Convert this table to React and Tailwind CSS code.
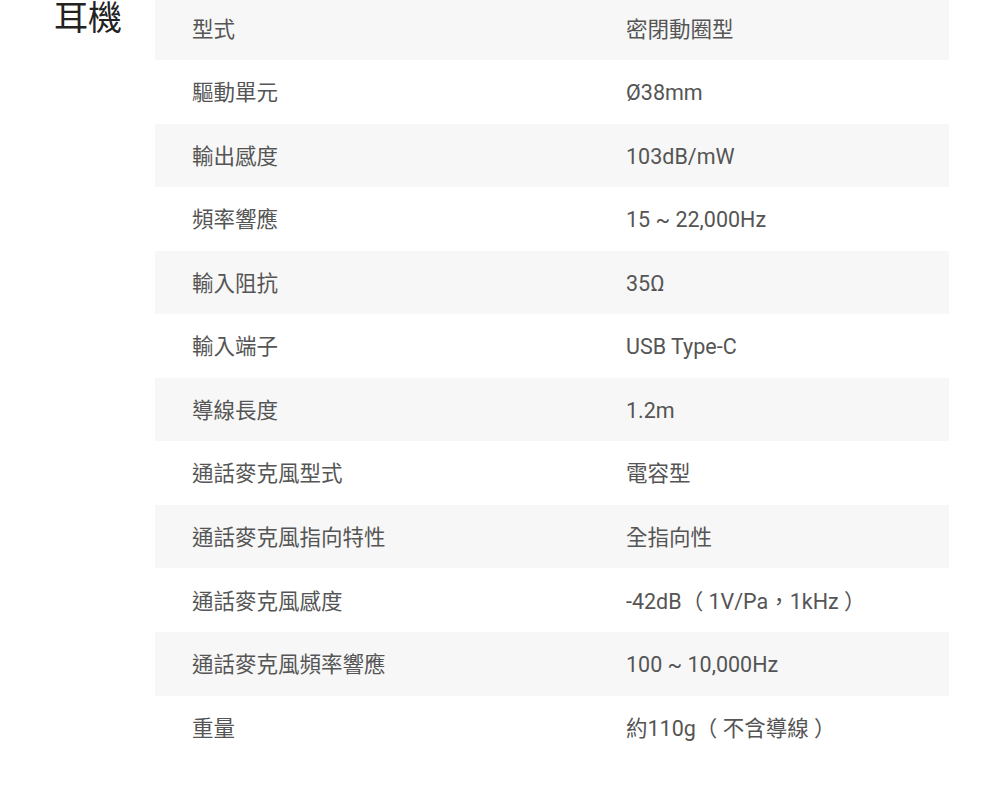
import React from 'react';

const specs = [
  ['型式', '密閉動圈型'],
  ['驅動單元', 'Ø38mm'],
  ['輸出感度', '103dB/mW'],
  ['頻率響應', '15 ~ 22,000Hz'],
  ['輸入阻抗', '35Ω'],
  ['輸入端子', 'USB Type-C'],
  ['導線長度', '1.2m'],
  ['通話麥克風型式', '電容型'],
  ['通話麥克風指向特性', '全指向性'],
  ['通話麥克風感度', '-42dB（ 1V/Pa，1kHz ）'],
  ['通話麥克風頻率響應', '100 ~ 10,000Hz'],
  ['重量', '約110g（ 不含導線 ）'],
];

const App = () => {
  return (
    <div
      className="min-h-screen bg-white"
      style={{ fontFamily: 'Roboto, "Noto Sans CJK TC", sans-serif' }}
    >
      <div className="flex -mt-[3.5px] pr-[51px]">
        {/* Section title */}
        <div className="w-[155px] shrink-0 pl-[54px] pt-[3.5px]">
          <h2 className="text-[34px] leading-[36px] text-[#222]">耳機</h2>
        </div>

        {/* Spec table */}
        <div className="flex-1">
          {specs.map(([label, value], i) => (
            <div
              key={label}
              className={`grid grid-cols-[434px_1fr] h-[63.55px] items-center text-[21.5px] text-[#555] ${
                i % 2 === 0 ? 'bg-[#f7f7f7]' : 'bg-white'
              }`}
            >
              <div className="pl-[37px] pt-[3px]">{label}</div>
              <div className="pl-[37px] pt-[3px]">{value}</div>
            </div>
          ))}
        </div>
      </div>
    </div>
  );
};

export default App;
